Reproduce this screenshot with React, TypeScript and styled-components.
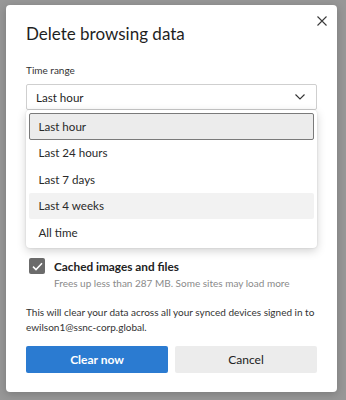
import React, { useState } from "react";
import styled, { createGlobalStyle } from "styled-components";

const GlobalStyle = createGlobalStyle`
  html, body {
    margin: 0;
    padding: 0;
    background: #979797;
    font-family: Lato, "Noto Sans", "Liberation Sans", sans-serif;
  }
  * {
    box-sizing: border-box;
  }
`;

const ranges = ["Last hour", "Last 24 hours", "Last 7 days", "Last 4 weeks", "All time"];

export default function App() {
  const [selected, setSelected] = useState(0);
  const [hovered] = useState(3);

  return (
    <>
      <GlobalStyle />
      <Backdrop>
        <Dialog>
          <CloseButton aria-label="Close">
            <svg width="10" height="10" viewBox="0 0 10 10">
              <path d="M0.5 0.5 L9.5 9.5 M9.5 0.5 L0.5 9.5" stroke="#3a3a3a" strokeWidth="1.1" />
            </svg>
          </CloseButton>
          <Title>Delete browsing data</Title>
          <FieldLabel>Time range</FieldLabel>
          <Select>
            <span>{ranges[selected]}</span>
            <svg width="10" height="6" viewBox="0 0 10 6">
              <path d="M0.5 0.5 L5 5 L9.5 0.5" fill="none" stroke="#333" strokeWidth="1.1" />
            </svg>
          </Select>
          <Menu>
            {ranges.map((r, i) => (
              <MenuItem
                key={r}
                $selected={i === selected}
                $hovered={i === hovered}
                onClick={() => setSelected(i)}
              >
                {r}
              </MenuItem>
            ))}
          </Menu>
          <CheckRow>
            <CheckBox>
              <svg width="11" height="9" viewBox="0 0 11 9">
                <path d="M1 4.6 L4 7.6 L10 1.2" fill="none" stroke="#fff" strokeWidth="1.5" />
              </svg>
            </CheckBox>
            <CheckText>
              <CheckLabel>Cached images and files</CheckLabel>
              <CheckSub>Frees up less than 287 MB. Some sites may load more</CheckSub>
            </CheckText>
          </CheckRow>
          <Note>
            This will clear your data across all your synced devices signed in to
            ewilson1@ssnc-corp.global.
          </Note>
          <Buttons>
            <Button $primary>Clear now</Button>
            <Button>Cancel</Button>
          </Buttons>
        </Dialog>
      </Backdrop>
    </>
  );
}

const Backdrop = styled.div`
  width: 346px;
  height: 400px;
  padding: 5px 0 0 6px;
  overflow: hidden;
`;

const Dialog = styled.div`
  position: relative;
  width: 331px;
  height: 387px;
  background: #ffffff;
  border-radius: 4px;
  padding: 17px 20px 0 20px;
  display: flex;
  flex-direction: column;
  box-shadow: 0 2px 8px rgba(0, 0, 0, 0.2);
`;

const CloseButton = styled.button`
  position: absolute;
  top: 5px;
  right: 5px;
  width: 21px;
  height: 21px;
  padding: 0;
  border: none;
  background: transparent;
  display: flex;
  align-items: center;
  justify-content: center;
  cursor: pointer;
`;

const Title = styled.h1`
  margin: 0;
  font-size: 17px;
  line-height: 24px;
  font-weight: 400;
  color: #1f1f1f;
`;

const FieldLabel = styled.div`
  margin-top: 17px;
  font-size: 10px;
  line-height: 14px;
  color: #333;
`;

const Select = styled.div`
  margin-top: 7px;
  height: 26px;
  border: 1px solid #cfcfcf;
  border-radius: 2px;
  padding: 0 11px 0 9px;
  display: flex;
  align-items: center;
  justify-content: space-between;
  font-size: 11.6px;
  color: #1f1f1f;
`;

const Menu = styled.div`
  position: relative;
  z-index: 2;
  height: 138px;
  background: #fff;
  border-radius: 4px;
  padding: 3px 3px 2px 3px;
  box-shadow: 0 3px 10px rgba(0, 0, 0, 0.18), 0 0 2px rgba(0, 0, 0, 0.12);
`;

const MenuItem = styled.div<{ $selected?: boolean; $hovered?: boolean }>`
  height: 26.5px;
  padding: 0 8.5px;
  display: flex;
  align-items: center;
  font-size: 11.6px;
  color: #2a2a2a;
  border-radius: 2px;
  cursor: pointer;
  background: ${(p) => (p.$selected ? "#ececec" : p.$hovered ? "#f2f2f2" : "transparent")};
  border: ${(p) => (p.$selected ? "1.5px solid #7a7a7a" : "1.5px solid transparent")};
`;

const CheckRow = styled.div`
  margin-top: 10px;
  display: flex;
  align-items: flex-start;
  gap: 9px;
  padding-left: 3px;
`;

const CheckBox = styled.div`
  width: 16px;
  height: 16px;
  flex: none;
  border-radius: 2px;
  background: #6b6b6b;
  display: flex;
  align-items: center;
  justify-content: center;
`;

const CheckText = styled.div`
  display: flex;
  flex-direction: column;
`;

const CheckLabel = styled.div`
  font-size: 11.8px;
  line-height: 18px;
  font-weight: 700;
  color: #222;
`;

const CheckSub = styled.div`
  font-size: 10px;
  line-height: 14px;
  color: #8a8a8a;
`;

const Note = styled.p`
  margin: 15px 0 0 0;
  font-size: 10px;
  line-height: 15px;
  color: #333;
`;

const Buttons = styled.div`
  margin-top: 11px;
  display: grid;
  grid-template-columns: 1fr 1fr;
  gap: 7px;
`;

const Button = styled.button<{ $primary?: boolean }>`
  height: 27px;
  border: none;
  border-radius: 2px;
  font-family: inherit;
  font-size: 12px;
  font-weight: ${(p) => (p.$primary ? 700 : 400)};
  color: ${(p) => (p.$primary ? "#fff" : "#222")};
  background: ${(p) => (p.$primary ? "#2b7bd1" : "#ececec")};
  cursor: pointer;
`;
